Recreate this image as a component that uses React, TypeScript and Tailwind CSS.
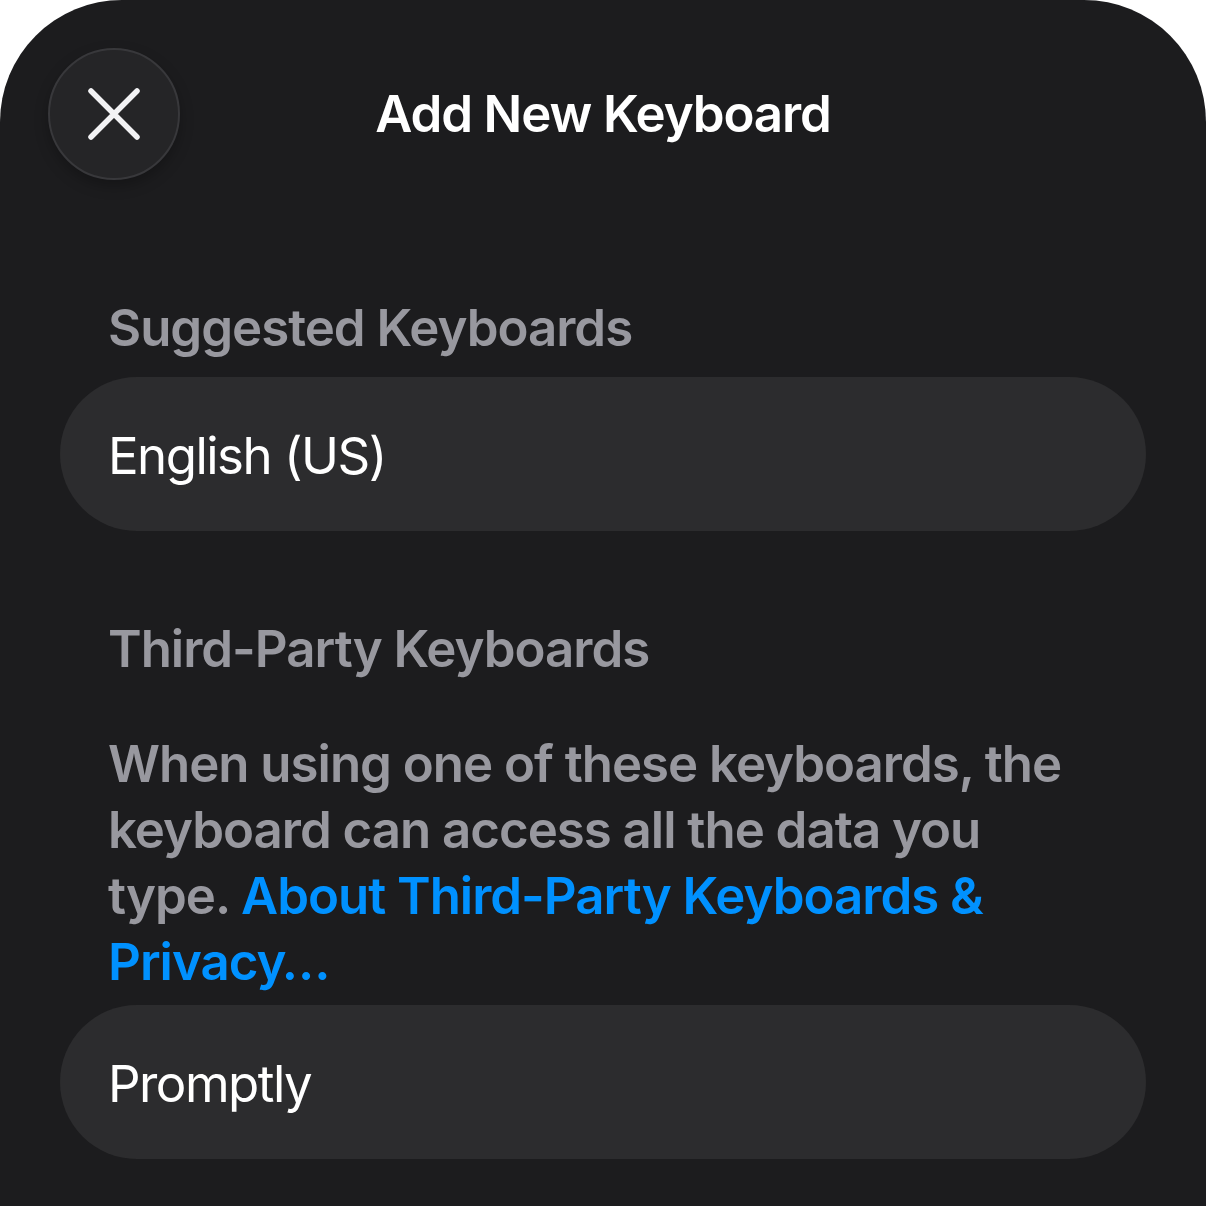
import React from "react";

export default function App() {
  const font = { fontFamily: "Inter, 'Noto Sans', sans-serif" };
  return (
    <div className="w-[1206px] h-[1206px] bg-white overflow-hidden" style={font}>
      <div className="w-full h-full bg-[#1c1c1e] rounded-t-[122px] flex flex-col">
        <div className="grid grid-cols-[132px_1fr_132px] items-center px-[48px] pt-[48px]">
          <button className="w-[132px] h-[132px] rounded-full bg-[#252527] border-2 border-[#38383b] shadow-[0_6px_14px_rgba(0,0,0,0.25)] flex items-center justify-center">
            <svg width="56" height="56" viewBox="0 0 56 56" fill="none">
              <path d="M5 5 L51 51 M51 5 L5 51" stroke="#f2f2f4" strokeWidth="5.5" strokeLinecap="round" />
            </svg>
          </button>
          <div className="text-center text-white text-[51px] font-semibold leading-[66px] tracking-[-0.022em]">
            Add New Keyboard
          </div>
          <div />
        </div>

        <div className="px-[108px] mt-[115px] text-[#98989f] text-[51px] font-semibold leading-[66px] tracking-[-0.02em]">
          Suggested Keyboards
        </div>
        <div className="mx-[60px] mt-[16px] h-[154px] rounded-full bg-[#2c2c2e] flex items-center px-[48px] pt-[4px] text-white text-[51px] leading-[66px] tracking-[-0.03em]">
          English (US)
        </div>

        <div className="px-[108px] mt-[85px] text-[#98989f] text-[51px] font-semibold leading-[66px] tracking-[-0.02em]">
          Third-Party Keyboards
        </div>
        <div className="px-[108px] mt-[49px] text-[#98989f] text-[51px] font-semibold leading-[66px] tracking-[-0.02em]">
          When using one of these keyboards, the
          <br />
          keyboard can access all the data you
          <br />
          type. <span className="text-[#0091ff]">About Third-Party Keyboards &amp;</span>
          <br />
          <span className="text-[#0091ff]">Privacy…</span>
        </div>
        <div className="mx-[60px] mt-[10px] h-[154px] rounded-full bg-[#2c2c2e] flex items-center px-[48px] pt-[4px] text-white text-[51px] leading-[66px] tracking-[-0.03em]">
          Promptly
        </div>
      </div>
    </div>
  );
}
